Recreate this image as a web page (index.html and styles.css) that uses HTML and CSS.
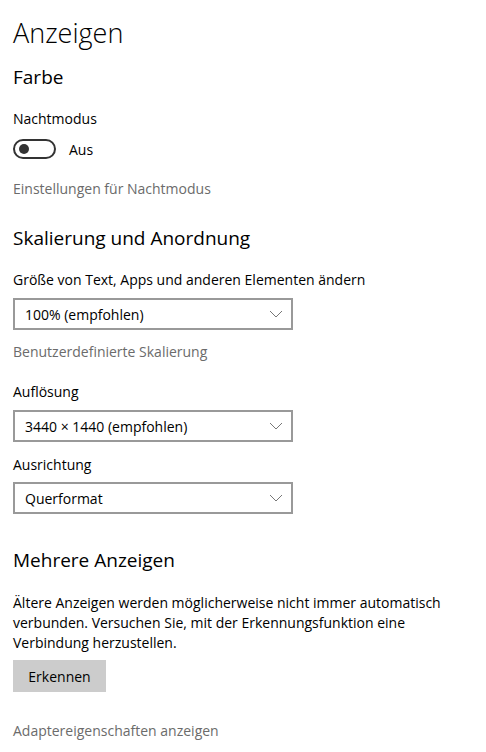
FILE: index.html
```html
<!DOCTYPE html>
<html lang="de">
<head>
<meta charset="utf-8">
<link rel="stylesheet" href="styles.css">
</head>
<body>
<div class="page">
  <h1 class="title">Anzeigen</h1>
  <h2 class="section s-farbe">Farbe</h2>
  <div class="label l-nacht">Nachtmodus</div>
  <div class="toggle-row">
    <span class="toggle"><span class="knob"></span></span>
    <span class="toggle-text">Aus</span>
  </div>
  <div class="link l-einst">Einstellungen für Nachtmodus</div>

  <h2 class="section s-skal">Skalierung und Anordnung</h2>
  <div class="label l-groesse">Größe von Text, Apps und anderen Elementen ändern</div>
  <div class="select sel-1"><span>100% (empfohlen)</span>
    <svg class="chev" width="14" height="8" viewBox="0 0 14 8"><path d="M1 1 L7 7 L13 1" fill="none" stroke="#777" stroke-width="1"/></svg></div>
  <div class="link l-benutzer">Benutzerdefinierte Skalierung</div>
  <div class="label l-aufl">Auflösung</div>
  <div class="select sel-2"><span>3440 × 1440 (empfohlen)</span>
    <svg class="chev" width="14" height="8" viewBox="0 0 14 8"><path d="M1 1 L7 7 L13 1" fill="none" stroke="#777" stroke-width="1"/></svg></div>
  <div class="label l-ausr">Ausrichtung</div>
  <div class="select sel-3"><span>Querformat</span>
    <svg class="chev" width="14" height="8" viewBox="0 0 14 8"><path d="M1 1 L7 7 L13 1" fill="none" stroke="#777" stroke-width="1"/></svg></div>

  <h2 class="section s-mehr">Mehrere Anzeigen</h2>
  <p class="para">Ältere Anzeigen werden möglicherweise nicht immer automatisch verbunden. Versuchen Sie, mit der Erkennungsfunktion eine Verbindung herzustellen.</p>
  <button class="btn">Erkennen</button>
  <div class="link l-adapter">Adaptereigenschaften anzeigen</div>
</div>
</body>
</html>
```
FILE: styles.css
```css
html, body {
  margin: 0;
  padding: 0;
  background: #fff;
}
body {
  font-family: "Open Sans", "Noto Sans", sans-serif;
  color: #000;
  font-size: 14px;
}
.page {
  padding: 15px 0 0 13px;
  width: 440px;
}
.title {
  margin: 0;
  font-size: 27px;
  font-weight: 300;
  line-height: 36px;
}
.section {
  margin: 0;
  font-size: 19px;
  font-weight: 400;
  line-height: 28px;
}
.label, .link, .para {
  line-height: 20px;
  margin: 0;
}
.link { color: #6b6b6b; }
.s-farbe { margin-top: 12px; }
.l-nacht { margin-top: 18px; }
.toggle-row {
  margin-top: 10px;
  height: 20px;
  display: flex;
  align-items: center;
}
.toggle {
  box-sizing: border-box;
  width: 43px;
  height: 20px;
  border: 2px solid #333;
  border-radius: 10px;
  display: flex;
  align-items: center;
  padding-left: 4px;
}
.knob {
  width: 10px;
  height: 10px;
  border-radius: 50%;
  background: #333;
}
.toggle-text { margin-left: 13px; }
.l-einst { margin-top: 20px; }
.s-skal { margin-top: 25px; }
.l-groesse { margin-top: 18px; }
.select {
  box-sizing: border-box;
  width: 280px;
  height: 32px;
  border: 2px solid #999;
  display: flex;
  align-items: center;
  justify-content: space-between;
  padding: 0 8px 0 10px;
}
.sel-1 { margin-top: 8px; }
.l-benutzer { margin-top: 12px; }
.l-aufl { margin-top: 20px; }
.sel-2 { margin-top: 8px; }
.l-ausr { margin-top: 13px; }
.sel-3 { margin-top: 7px; }
.s-mehr { margin-top: 32px; }
.para { margin-top: 19px; width: 440px; }
.btn {
  display: block;
  margin-top: 7px;
  width: 93px;
  height: 32px;
  border: none;
  background: #ccc;
  font-family: inherit;
  font-size: 14px;
  color: #000;
  padding: 0;
}
.l-adapter { margin-top: 29px; }
```
